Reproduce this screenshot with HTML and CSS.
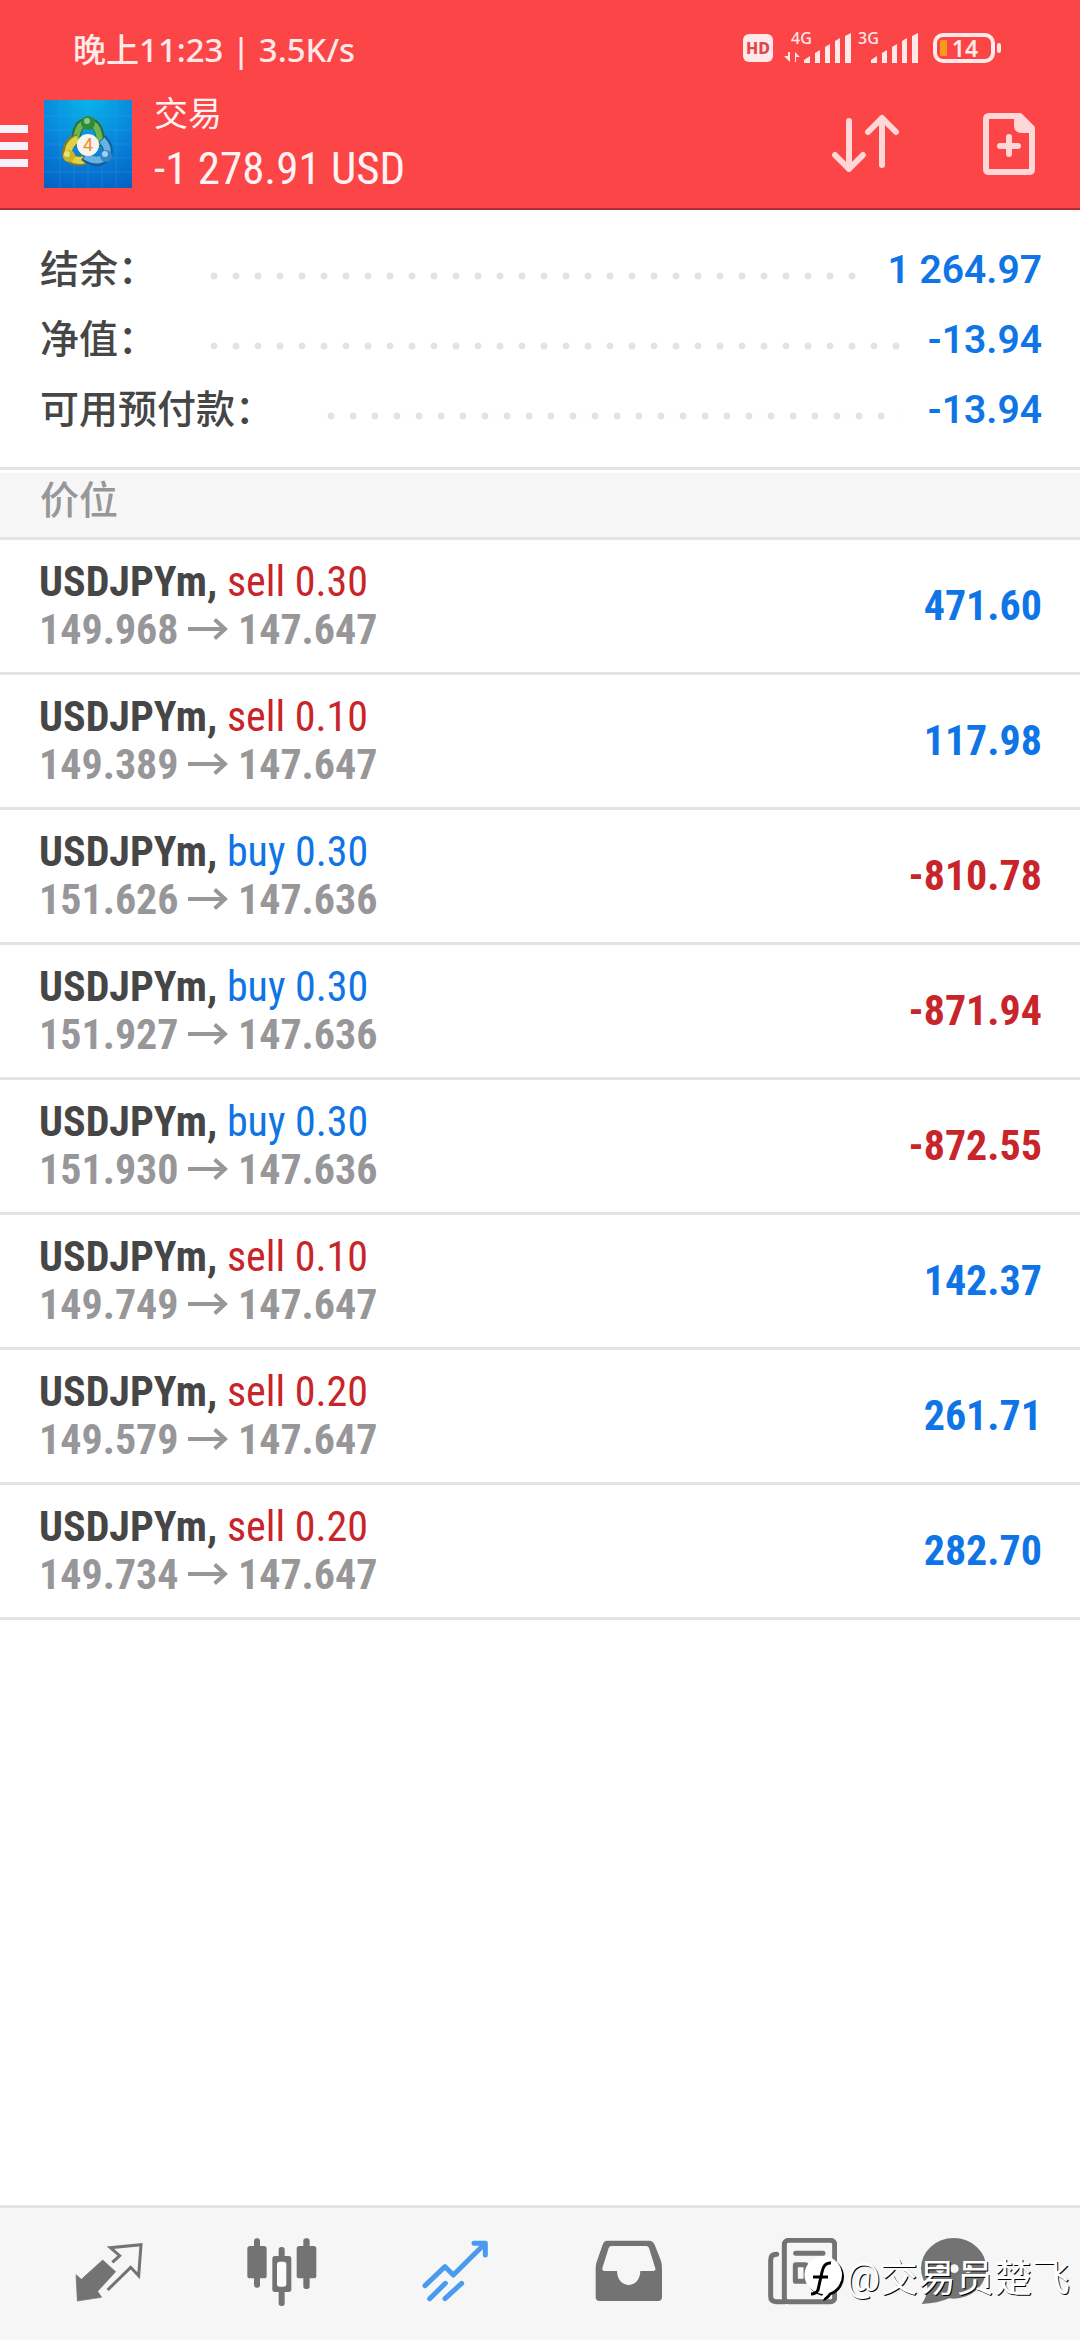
FILE: index.html
```html
<!DOCTYPE html>
<html lang="zh-CN">
<head>
    <meta charset="UTF-8">
    <meta name="viewport" content="width=device-width, initial-scale=1.0">
    <title>交易</title>
    <link rel="stylesheet" href="styles.css">
</head>
<body>

    <header class="top">
        <div class="status">
            <span>晚上11:23 | 3.5K/s</span>
            <svg class="status-icons" viewBox="0 0 264 44" fill="#ffe9e9">
                <rect x="4" y="8" width="30" height="28" rx="6"/>
                <text class="hd" x="19" y="28" text-anchor="middle">HD</text>
                <text class="net" x="52" y="18">4G</text>
                <path d="M51 26v10l-6-6h4v-4zM56 36V26l5 5h-4v5z"/>
                <path d="M65 37v-3l6-4v7zM76 37V27l5-3v13zM86 37V21l5-3v19zM96 37V15l5-3v25zM106 37V10l6-3v30z"/>
                <text class="net" x="119" y="18">3G</text>
                <path d="M132 37v-3l6-4v7zM143 37V27l5-3v13zM153 37V21l5-3v19zM163 37V15l5-3v25zM173 37V10l6-3v30z"/>
                <rect x="196" y="9" width="58" height="26" rx="8" fill="none" stroke="#ffe9e9" stroke-width="4"/>
                <rect x="201" y="14" width="7" height="16" rx="1" fill="#f79a1e"/>
                <rect x="258" y="17" width="4" height="10" rx="2"/>
                <text class="battery" x="226" y="31" text-anchor="middle">14</text>
            </svg>
        </div>
        <div class="bar">
            <button class="menu" aria-label="菜单"><i></i><i></i><i></i></button>
            <svg class="logo" viewBox="0 0 88 88">
                <defs>
                    <radialGradient id="sky" cx="50%" cy="0%" r="110%">
                        <stop offset="0" stop-color="#08b4ea"/>
                        <stop offset="0.6" stop-color="#087fd8"/>
                        <stop offset="1" stop-color="#0561c2"/>
                    </radialGradient>
                </defs>
                <rect width="88" height="88" fill="url(#sky)"/>
                <path d="M16 0v88M30 0v88M44 0v88M58 0v88M72 0v88M0 16h88M0 30h88M0 44h88M0 58h88M0 72h88" stroke="#35a7ec" stroke-opacity="0.3"/>
                <path d="M32 44Q31 23 44 22Q57 23 57 46" fill="none" stroke="#26713a" stroke-width="9"/>
                <path d="M32 43Q32 24 44 22Q56 24 56 45" fill="none" stroke="#6fb64d" stroke-width="6"/>
                <path d="M34 39Q23 42 23 55Q29 63 41 60" fill="none" stroke="#8a7d1b" stroke-width="10"/>
                <path d="M34 39Q24 43 24 55Q29 62 40 60" fill="none" stroke="#ddd24a" stroke-width="7"/>
                <path d="M58 39Q67 48 62 57Q54 66 40 56" fill="none" stroke="#175c9b" stroke-width="10"/>
                <path d="M58 40Q66 48 62 56Q54 64 41 56" fill="none" stroke="#65b2e3" stroke-width="7"/>
                <circle cx="44" cy="23" r="7" fill="#2e8b3c"/>
                <circle cx="43" cy="21" r="3" fill="#86cf85"/>
                <circle cx="25" cy="56" r="6" fill="#c5b527"/>
                <circle cx="23" cy="54" r="3" fill="#e8e07a"/>
                <circle cx="62" cy="56" r="6" fill="#3684c4"/>
                <circle cx="61" cy="54" r="3" fill="#9bd2f2"/>
                <circle cx="44" cy="45" r="11" fill="#f7f4ee"/>
                <text class="logo-number" x="44" y="51" text-anchor="middle">4</text>
            </svg>
            <div class="title">
                <h1>交易</h1>
                <p>-1 278.91 USD</p>
            </div>
            <button class="action" aria-label="排序">
                <svg viewBox="0 0 72 64" fill="none" stroke="#ffd7d6" stroke-width="6" stroke-linecap="round" stroke-linejoin="round">
                    <path d="M21 9v48M7 43l14 14 14-14M54 53V6M40 20L54 6l14 14"/>
                </svg>
            </button>
            <button class="action" aria-label="新订单">
                <svg viewBox="0 0 72 64" fill="none" stroke="#ffd7d6" stroke-width="6" stroke-linecap="round" stroke-linejoin="round">
                    <path d="M17 4h31l12 12v41q0 3-3 3H17q-3 0-3-3V7q0-3 3-3z"/>
                    <path d="M42 5v8q0 8 8 8h10v-5L48 4z" fill="#ffd7d6" stroke="none"/>
                    <path d="M37 25v17M28 34h18"/>
                </svg>
            </button>
        </div>
    </header>

    <dl class="summary">
        <div><dt>结余：</dt><dd>1 264.97</dd></div>
        <div><dt>净值：</dt><dd>-13.94</dd></div>
        <div><dt>可用预付款：</dt><dd>-13.94</dd></div>
    </dl>

    <h2 class="section">价位</h2>

    <svg width="0" height="0" hidden>
        <symbol id="arrow" viewBox="0 0 42 24">
            <path d="M0 12h39M28 2l11 10-11 10" fill="none" stroke="currentColor" stroke-width="4"/>
        </symbol>
    </svg>

    <ul class="positions">
        <li>
            <div>
                <p class="symbol">USDJPYm, <span class="sell">sell 0.30</span></p>
                <p class="price">149.968 <svg class="arrow"><use href="#arrow"/></svg> 147.647</p>
            </div>
            <b class="plus">471.60</b>
        </li>
        <li>
            <div>
                <p class="symbol">USDJPYm, <span class="sell">sell 0.10</span></p>
                <p class="price">149.389 <svg class="arrow"><use href="#arrow"/></svg> 147.647</p>
            </div>
            <b class="plus">117.98</b>
        </li>
        <li>
            <div>
                <p class="symbol">USDJPYm, <span class="buy">buy 0.30</span></p>
                <p class="price">151.626 <svg class="arrow"><use href="#arrow"/></svg> 147.636</p>
            </div>
            <b class="minus">-810.78</b>
        </li>
        <li>
            <div>
                <p class="symbol">USDJPYm, <span class="buy">buy 0.30</span></p>
                <p class="price">151.927 <svg class="arrow"><use href="#arrow"/></svg> 147.636</p>
            </div>
            <b class="minus">-871.94</b>
        </li>
        <li>
            <div>
                <p class="symbol">USDJPYm, <span class="buy">buy 0.30</span></p>
                <p class="price">151.930 <svg class="arrow"><use href="#arrow"/></svg> 147.636</p>
            </div>
            <b class="minus">-872.55</b>
        </li>
        <li>
            <div>
                <p class="symbol">USDJPYm, <span class="sell">sell 0.10</span></p>
                <p class="price">149.749 <svg class="arrow"><use href="#arrow"/></svg> 147.647</p>
            </div>
            <b class="plus">142.37</b>
        </li>
        <li>
            <div>
                <p class="symbol">USDJPYm, <span class="sell">sell 0.20</span></p>
                <p class="price">149.579 <svg class="arrow"><use href="#arrow"/></svg> 147.647</p>
            </div>
            <b class="plus">261.71</b>
        </li>
        <li>
            <div>
                <p class="symbol">USDJPYm, <span class="sell">sell 0.20</span></p>
                <p class="price">149.734 <svg class="arrow"><use href="#arrow"/></svg> 147.647</p>
            </div>
            <b class="plus">282.70</b>
        </li>
    </ul>

    <nav class="tabs">
        <a href="#quotes" aria-label="行情">
            <svg viewBox="0 0 216 216">
                <path d="M89 66L128 101L74 160L86 178L13 189L9 110L25 124z" stroke-width="2" stroke-linejoin="round"/>
                <path d="M118 73L140 53L112 29L204 20L197 113L173 88L104 156" fill="none" stroke-width="9"/>
            </svg>
        </a>
        <a href="#chart" aria-label="图表">
            <svg viewBox="0 0 216 216" stroke="none">
                <rect x="24" y="1" width="18" height="148" rx="8"/>
                <rect x="4" y="24" width="58" height="97" rx="8"/>
                <rect x="98" y="27" width="18" height="177" rx="8"/>
                <rect x="79" y="54" width="57" height="108" rx="8"/>
                <rect x="93" y="71" width="28" height="75" rx="8" fill="#fafafa"/>
                <rect x="172" y="1" width="19" height="152" rx="8"/>
                <rect x="152" y="24" width="59" height="97" rx="8"/>
            </svg>
        </a>
        <a href="#trade" class="active" aria-label="交易">
            <svg viewBox="0 0 216 216" fill="none" stroke-width="15" stroke-linecap="round" stroke-linejoin="round">
                <path d="M18 143L78 86L103 111L196 19M165 16H199V51M32 182L79 136M78 182L128 136"/>
            </svg>
        </a>
        <a href="#history" aria-label="历史">
            <svg viewBox="0 0 216 216" stroke="none" fill-rule="evenodd">
                <path d="M45 8H172Q182 8 188 20L206 66Q210 76 210 92V177Q210 189 198 189H23Q11 189 11 177V92Q11 76 16 66L32 20Q36 8 45 8zM58 24Q52 24 50 30L31 91Q30 99 38 99H75C76 155 144 155 145 99H184Q192 99 190 91L171 30Q169 24 162 24z"/>
            </svg>
        </a>
        <a href="#news" aria-label="新闻">
            <svg viewBox="0 0 216 216" fill="none" stroke-width="15" stroke-linecap="round">
                <rect x="58" y="7" width="151" height="184" rx="12"/>
                <path d="M35 49Q17 49 17 66V175Q17 191 33 191H60M92 46H174M148 80H174M148 110H174"/>
                <rect x="91" y="80" width="32" height="50" rx="2"/>
            </svg>
        </a>
        <a href="#chat" aria-label="聊天">
            <svg viewBox="0 0 216 216" stroke="none">
                <ellipse cx="107" cy="91" rx="98" ry="91"/>
                <path d="M25 130Q36 160 11 198Q60 196 95 180z"/>
                <circle cx="66" cy="92" r="13" fill="#f6f6f6"/>
                <circle cx="109" cy="92" r="13" fill="#f6f6f6"/>
                <circle cx="150" cy="92" r="13" fill="#f6f6f6"/>
            </svg>
        </a>
        <div class="watermark">
            <svg viewBox="0 0 42 48">
                <path d="M22 4A19 19 0 0 1 27 41Q24 46 19 47L21 42A19 19 0 0 1 22 4z" fill="#000"/>
                <path d="M20 2A19 19 0 0 1 25 39Q22 44 17 45L19 40A19 19 0 0 1 20 2z" fill="#fff"/>
                <path d="M27 9Q20 8 18 18L14 36Q12 40 7 40M9 23H24" fill="none" stroke="#000" stroke-width="3"/>
            </svg>
            <span>@交易员楚飞</span>
        </div>
    </nav>

</body>
</html>
```
FILE: styles.css
```css
* {
    box-sizing: border-box;
}
body {
    margin: 0;
    min-height: 100vh;
    display: flex;
    flex-direction: column;
    background: #fff;
    color: #464646;
    font-family: Roboto, "Noto Sans CJK SC", sans-serif;
}
h1, h2, p, ul, dl, dd {
    margin: 0;
    padding: 0;
    font-weight: 400;
}
button {
    padding: 0;
    border: 0;
    background: none;
    cursor: pointer;
}
svg {
    display: block;
}

/* header */
.top {
    height: 210px;
    background: #fb4546;
    border-bottom: 2px solid #b62b34;
    color: #fff3f3;
}
.status {
    height: 96px;
    padding: 0 77px 0 73px;
    display: flex;
    align-items: center;
    justify-content: space-between;
    font-family: "Noto Sans", "Noto Sans CJK SC", sans-serif;
    font-size: 33px;
    font-weight: 500;
    color: #ffe9e9;
}
.status-icons {
    width: 264px;
    height: 44px;
}
.hd {
    font-size: 16px;
    font-weight: 800;
    fill: #e0484b;
}
.net {
    font-size: 16px;
    font-weight: 500;
}
.battery {
    font-size: 23px;
    font-weight: 600;
}
.bar {
    display: flex;
    align-items: center;
    height: 96px;
    padding-right: 36px;
}
.menu {
    width: 28px;
    margin-right: 16px;
    padding-top: 3px;
    display: flex;
    flex-direction: column;
    gap: 9px;
}
.menu i {
    height: 8px;
    background: #f8f0fa;
}
.logo {
    width: 88px;
    height: 88px;
}
.logo-number {
    font-size: 18px;
    fill: #ee8a2c;
}
.title {
    flex: 1;
    margin-left: 22px;
    padding-top: 9px;
}
.title h1 {
    font-size: 34px;
    line-height: 40px;
}
.title p {
    font-family: "Roboto Condensed", Roboto, sans-serif;
    font-size: 45px;
    line-height: 70px;
}
.action {
    margin-left: 72px;
}
.action svg {
    width: 72px;
    height: 64px;
}

/* account summary */
.summary {
    padding: 25px 38px 22px 40px;
    border-bottom: 3px solid #e3e3e3;
}
.summary div {
    display: flex;
    align-items: center;
    height: 70px;
    font-size: 39px;
    font-weight: 500;
}
.summary div::after {
    content: "";
    order: 1;
    flex: 1;
    height: 22px;
    margin: 12px 27px 0 46px;
    background: radial-gradient(circle, #e3e3e3 3px, transparent 4px) 0 0 / 22px 22px repeat-x;
}
.summary dt {
    padding-bottom: 8px;
}
.summary dd {
    order: 2;
    font-weight: 600;
    color: #0f75e6;
}
.section {
    margin-top: 3px;
    padding-left: 40px;
    height: 67px;
    border-bottom: 3px solid #e3e3e3;
    background: #f6f6f6;
    color: #97979a;
    font-size: 39px;
    font-weight: 500;
    line-height: 56px;
}

/* open positions */
.positions {
    list-style: none;
    font-family: "Roboto Condensed", Roboto, sans-serif;
    font-size: 42px;
    line-height: 48px;
}
.positions li {
    display: flex;
    align-items: center;
    justify-content: space-between;
    height: 135px;
    padding: 0 38px 0 39px;
    border-bottom: 3px solid #e3e3e3;
}
.symbol {
    font-weight: 700;
}
.symbol span {
    font-weight: 400;
}
.price {
    font-weight: 700;
    color: #97979a;
}
.arrow {
    display: inline-block;
    width: 40px;
    height: 24px;
    margin-bottom: 3px;
}
.buy, .plus {
    color: #0f75e6;
}
.sell, .minus {
    color: #c8252a;
}

/* bottom tabs */
.tabs {
    position: relative;
    margin-top: auto;
    height: 135px;
    padding: 0 60px 0 22px;
    display: grid;
    grid-template-columns: repeat(5, 173fr) 133fr;
    align-items: center;
    justify-items: center;
    border-top: 3px solid #e3e3e3;
    background: #f6f6f6;
}
.tabs a {
    color: #737373;
}
.tabs a svg {
    width: 72px;
    height: 72px;
}
.tabs a svg:not([fill]) {
    fill: currentColor;
}
.tabs a svg:not([stroke]) {
    stroke: currentColor;
}
.tabs .active {
    color: #4a9bee;
}

/* lies over the last two tabs */
.watermark {
    position: absolute;
    right: 10px;
    bottom: 38px;
    display: flex;
    align-items: center;
    color: #fff;
    font-size: 38px;
    line-height: 48px;
    text-shadow: 1px 1px 0 #000;
}
.watermark svg {
    width: 42px;
    height: 48px;
}
```
